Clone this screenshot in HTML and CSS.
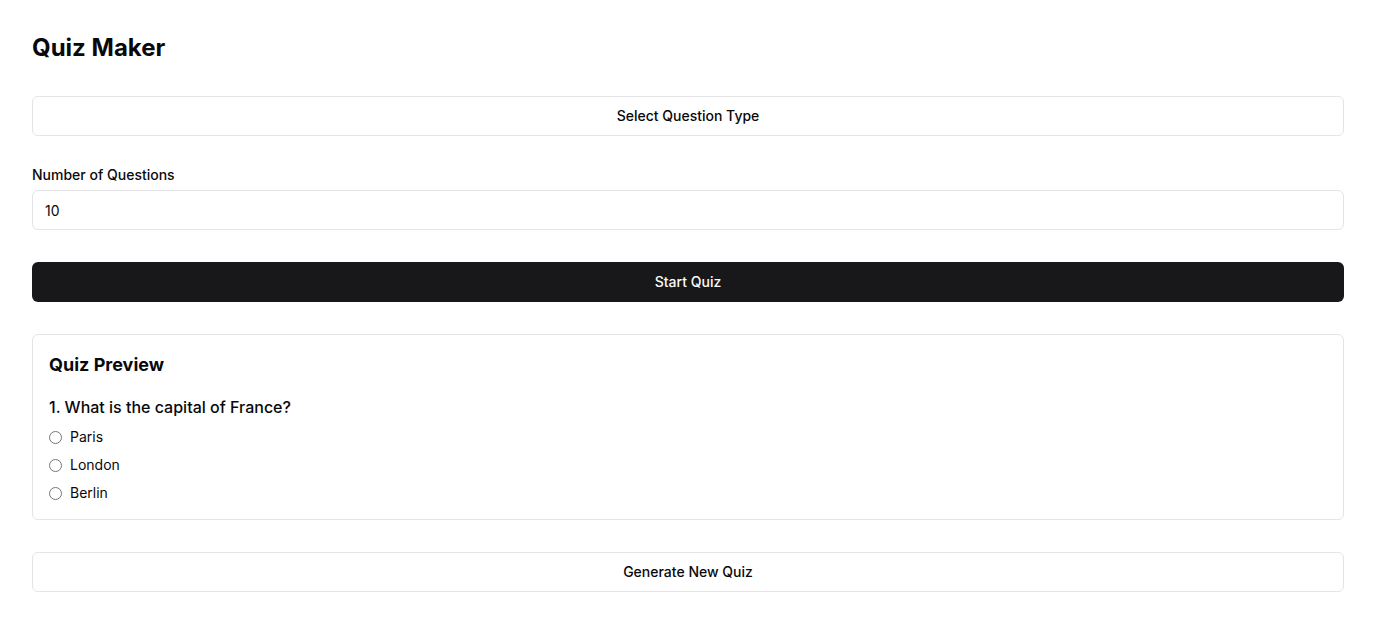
FILE: index.html
```html
<!DOCTYPE html>
<html lang="en">
<head>
<meta charset="utf-8">
<title>Quiz Maker</title>
<link rel="stylesheet" href="styles.css">
</head>
<body>
<main class="page">
  <h1 class="title">Quiz Maker</h1>
  <button class="btn btn-outline" type="button">Select Question Type</button>
  <div class="field">
    <label class="label" for="num">Number of Questions</label>
    <input class="input" id="num" type="number" value="10">
  </div>
  <button class="btn btn-primary" type="button">Start Quiz</button>
  <section class="card">
    <h2 class="card-title">Quiz Preview</h2>
    <p class="question">1. What is the capital of France?</p>
    <div class="options">
      <label class="option"><input type="radio" name="q1" class="radio"><span>Paris</span></label>
      <label class="option"><input type="radio" name="q1" class="radio"><span>London</span></label>
      <label class="option"><input type="radio" name="q1" class="radio"><span>Berlin</span></label>
    </div>
  </section>
  <button class="btn btn-outline" type="button">Generate New Quiz</button>
</main>
</body>
</html>
```

FILE: styles.css
```css
* { box-sizing: border-box; }
html, body { margin: 0; padding: 0; background: #fff; }
body {
  font-family: Inter, "Liberation Sans", sans-serif;
  color: #09090b;
}
.page {
  padding: 32px;
  display: flex;
  flex-direction: column;
  gap: 32px;
}
.title {
  margin: 0;
  font-size: 24px;
  line-height: 32px;
  font-weight: 700;
}
.btn {
  height: 40px;
  width: 100%;
  display: flex;
  align-items: center;
  justify-content: center;
  padding: 8px 16px 9px;
  border-radius: 6px;
  font-family: inherit;
  font-size: 14px;
  line-height: 20px;
  font-weight: 500;
  cursor: pointer;
}
.btn-outline {
  background: #fff;
  border: 1px solid #e4e4e7;
  color: #09090b;
}
.btn-primary {
  background: #18181b;
  border: none;
  color: #fafafa;
}
.field {
  display: flex;
  flex-direction: column;
  gap: 8px;
}
.label {
  font-size: 14px;
  line-height: 14px;
  font-weight: 500;
}
.input {
  height: 40px;
  width: 100%;
  border: 1px solid #e4e4e7;
  border-radius: 6px;
  padding: 0 12px;
  font-family: inherit;
  font-size: 14px;
  color: #09090b;
  background: #fff;
  -moz-appearance: textfield;
}
.input::-webkit-inner-spin-button,
.input::-webkit-outer-spin-button { -webkit-appearance: none; margin: 0; }
.card {
  border: 1px solid #e4e4e7;
  border-radius: 6px;
  padding: 16px;
}
.card-title {
  margin: 0 0 16px;
  font-size: 18px;
  line-height: 28px;
  font-weight: 700;
}
.question {
  margin: 0 0 8px;
  font-size: 16px;
  line-height: 24px;
  font-weight: 500;
}
.options {
  display: flex;
  flex-direction: column;
  gap: 8px;
}
.option {
  display: flex;
  align-items: center;
  gap: 8px;
  font-size: 14px;
  line-height: 20px;
}
.radio {
  margin: 0;
  width: 13px;
  height: 13px;
}
```
